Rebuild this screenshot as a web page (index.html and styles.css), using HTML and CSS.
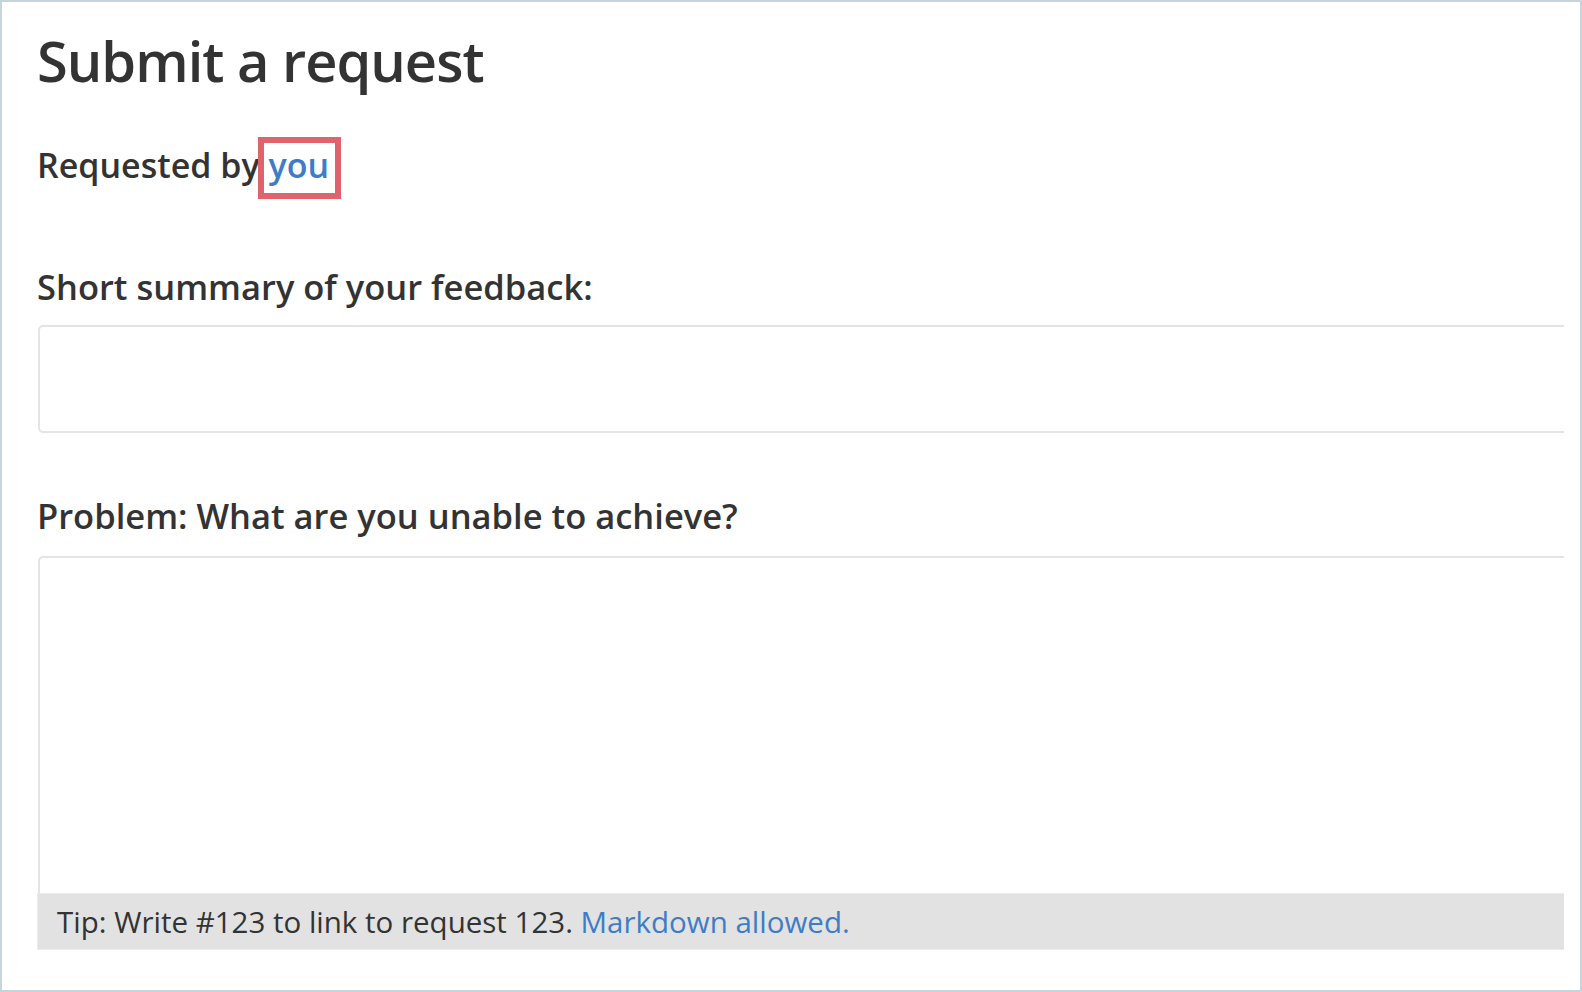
FILE: index.html
```html
<!DOCTYPE html>
<html lang="en">
<head>
    <meta charset="UTF-8">
    <meta name="viewport" content="width=device-width, initial-scale=1.0">
    <title>Submit a request</title>
    <link rel="stylesheet" href="styles.css">
</head>
<body>

    <div class="frame">
        <div class="content">
            <h1>Submit a request</h1>
            <p class="requester">Requested by <a href="#" class="you">you</a></p>

            <!-- Subject -->
            <label class="field-label" for="subject">Short summary of your feedback:</label>
            <input type="text" id="subject" class="field-input">

            <!-- Description -->
            <label class="field-label problem" for="problem">Problem: What are you unable to achieve?</label>
            <div class="editor">
                <textarea id="problem" class="field-area"></textarea>
                <div class="tip">Tip: Write #123 to link to request 123. <a href="#">Markdown allowed.</a></div>
            </div>
        </div>
    </div>

</body>
</html>
```

FILE: styles.css
```css
html, body {
    margin: 0;
    padding: 0;
    background-color: white;
}
body {
    font-family: "Open Sans", "Liberation Sans", sans-serif;
    color: #333333;
}
.frame {
    box-sizing: border-box;
    width: 1582px;
    height: 992px;
    border: 2px solid #c8d4dc;
    padding: 18px 16px 0 35px;
}
.content {
    overflow: hidden;
    height: 100%;
}
h1 {
    font-size: 56px;
    font-weight: 600;
    line-height: 80px;
    letter-spacing: -1px;
    margin: 0;
}
a {
    color: #3d7dc8;
    text-decoration: none;
}
.requester {
    font-size: 34px;
    font-weight: 600;
    line-height: 44px;
    margin: 43px 0 0 0;
}
.you {
    padding: 0 7px 6px 5px;
    margin: 0 -7px 0 -5px;
    outline: 6px solid #e0636c;
    outline-offset: -1px;
}
.field-label {
    display: block;
    font-size: 34.5px;
    font-weight: 600;
    line-height: 44px;
    margin-top: 78px;
}
.field-label.problem {
    margin-top: 61px;
}
.field-input {
    display: block;
    box-sizing: border-box;
    width: calc(100% + 40px);
    height: 108px;
    margin: 16px 0 0 1px;
    border: 2px solid #e4e4e4;
    border-radius: 5px;
    background: white;
}
.editor {
    width: calc(100% + 40px);
    margin-top: 18px;
}
.field-area {
    display: block;
    box-sizing: border-box;
    width: 100%;
    height: 337px;
    margin-left: 1px;
    border: 2px solid #e4e4e4;
    border-bottom: none;
    border-radius: 5px 5px 0 0;
    resize: none;
    background: white;
}
.tip {
    box-sizing: border-box;
    height: 57px;
    padding: 2px 0 0 19px;
    background-color: #e2e2e2;
    border: 1px solid #ebebeb;
    font-size: 29.5px;
    line-height: 52px;
}
```
